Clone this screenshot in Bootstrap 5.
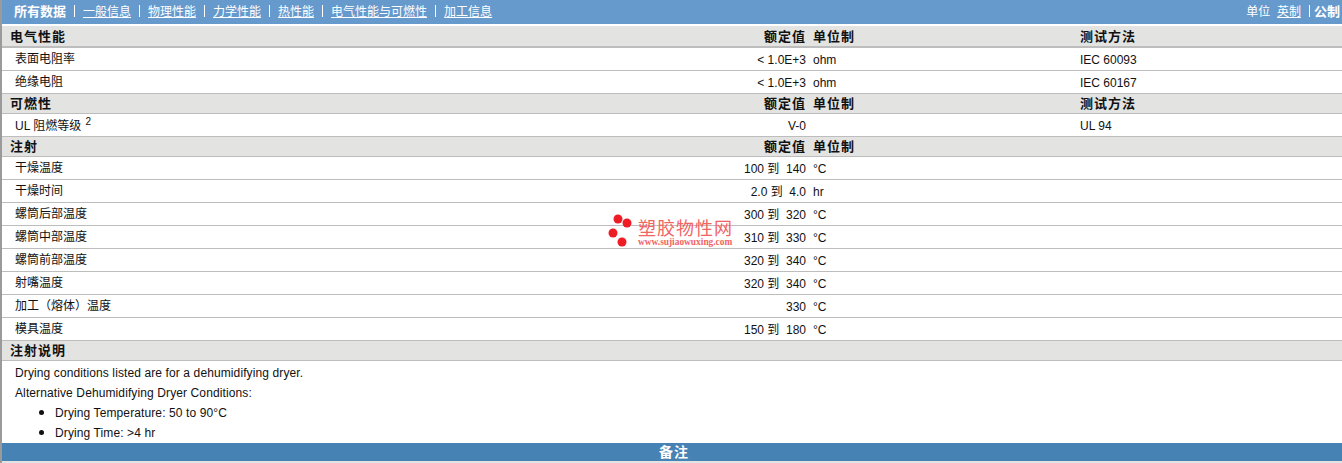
<!DOCTYPE html>
<html lang="zh">
<head>
<meta charset="utf-8">
<title>塑胶物性</title>
<link href="https://cdn.jsdelivr.net/npm/bootstrap@5.3.0/dist/css/bootstrap.min.css" rel="stylesheet">
<style>
html,body{height:463px;overflow:hidden}
body{background:#e3e3e1;font-family:"Liberation Sans","Noto Sans CJK SC",sans-serif;font-size:12px;color:#111;line-height:15px}
.pagewrap{border-left:2px solid #9a9a9a;height:463px}
.sheet{position:relative;background:#fff;height:461px}
.topbar{height:24px;background:#6699cc;color:#fff;padding:0 2px 0 12px;margin-bottom:2px}
.topbar a{color:#fff}
.topbar b{font-weight:700;font-size:13px}
.sepbar{display:inline-block;width:1px;height:12px;background:#fff;margin:0 8px;vertical-align:-1px}
.datatable{table-layout:fixed;width:100%;border-collapse:collapse;margin:0}
.datatable td,.datatable th{padding:0;vertical-align:middle;font-weight:400;color:#111;background:transparent;box-shadow:none;border-width:0 0 1px;border-style:solid;border-color:#bdbdbd}
.col-name{width:808px}.col-unit{width:267px}
.datatable .rowhead th{height:20px;background:#e3e3e1;font-weight:700;font-size:13px;letter-spacing:1px}
.datatable .rowhead th:first-child{padding-left:8px}
.datatable .rowhead.first th{height:21px;border-bottom-width:2px}
.datatable .rowdata td{height:23px;padding-top:4px}
.datatable .rowdata td:first-child{padding-left:13px}
.datatable .cell-val{text-align:right;padding-right:4px}
.datatable .cell-unit{padding-left:3px}
.label-text{display:inline-block;margin-top:-1px;vertical-align:top}
.notes{padding:5px 0 0 13px;height:82px;letter-spacing:.11px}
.notes p{margin:0 0 5px;height:15px}
.notes ul{margin:-2px 0 0;padding-left:40px}
.notes li{height:20px}
.notes li::marker{font-size:15px}
.footbar{height:18px;background:#4682b4;color:#fff;text-align:center;font-weight:700;font-size:14px;line-height:18px;letter-spacing:1px;padding-left:4px}
.stamp{position:absolute;left:606px;top:212px;width:130px;height:38px;color:#f26464}
.stamp svg{position:absolute;left:0;top:0}
.stamp-name{position:absolute;left:30px;top:8px;font-size:18px;line-height:18px;white-space:nowrap;letter-spacing:1px}
.stamp-url{position:absolute;left:30px;top:26px;font-family:"Liberation Serif",serif;font-size:9.4px;font-weight:700;line-height:9px;white-space:nowrap}
sup.refnote{font-size:10px;top:-5px;margin-left:1px}
</style>
</head>
<body>
<div class="pagewrap">
<div class="sheet">
  <div class="topbar d-flex justify-content-between align-items-center">
    <div><b>所有数据</b><span class="sepbar"></span><a href="#">一般信息</a><span class="sepbar"></span><a href="#">物理性能</a><span class="sepbar"></span><a href="#">力学性能</a><span class="sepbar"></span><a href="#">热性能</a><span class="sepbar"></span><a href="#">电气性能与可燃性</a><span class="sepbar"></span><a href="#">加工信息</a></div>
    <div>单位&nbsp; <a href="#">英制</a><span class="sepbar ms-2 me-1"></span><b>公制</b></div>
  </div>
  <table class="table datatable">
    <colgroup><col class="col-name"><col class="col-unit"><col></colgroup>
    <tbody>
      <tr class="rowhead first"><th>电气性能<span class="float-end me-1">额定值</span></th><th class="cell-unit">单位制</th><th class="cell-unit">测试方法</th></tr>
      <tr class="rowdata"><td><span class="label-text">表面电阻率</span><span class="float-end cell-val">&lt; 1.0E+3</span></td><td class="cell-unit">ohm</td><td class="cell-unit">IEC 60093</td></tr>
      <tr class="rowdata"><td><span class="label-text">绝缘电阻</span><span class="float-end cell-val">&lt; 1.0E+3</span></td><td class="cell-unit">ohm</td><td class="cell-unit">IEC 60167</td></tr>
      <tr class="rowhead"><th>可燃性<span class="float-end me-1">额定值</span></th><th class="cell-unit">单位制</th><th class="cell-unit">测试方法</th></tr>
      <tr class="rowdata"><td>UL 阻燃等级 <sup class="refnote">2</sup><span class="float-end cell-val">V-0</span></td><td class="cell-unit"></td><td class="cell-unit">UL 94</td></tr>
      <tr class="rowhead"><th>注射<span class="float-end me-1">额定值</span></th><th class="cell-unit">单位制</th><th></th></tr>
      <tr class="rowdata"><td><span class="label-text">干燥温度</span><span class="float-end cell-val">100 到&nbsp; 140</span></td><td class="cell-unit">°C</td><td></td></tr>
      <tr class="rowdata"><td><span class="label-text">干燥时间</span><span class="float-end cell-val">2.0 到&nbsp; 4.0</span></td><td class="cell-unit">hr</td><td></td></tr>
      <tr class="rowdata"><td><span class="label-text">螺筒后部温度</span><span class="float-end cell-val">300 到&nbsp; 320</span></td><td class="cell-unit">°C</td><td></td></tr>
      <tr class="rowdata"><td><span class="label-text">螺筒中部温度</span><span class="float-end cell-val">310 到&nbsp; 330</span></td><td class="cell-unit">°C</td><td></td></tr>
      <tr class="rowdata"><td><span class="label-text">螺筒前部温度</span><span class="float-end cell-val">320 到&nbsp; 340</span></td><td class="cell-unit">°C</td><td></td></tr>
      <tr class="rowdata"><td><span class="label-text">射嘴温度</span><span class="float-end cell-val">320 到&nbsp; 340</span></td><td class="cell-unit">°C</td><td></td></tr>
      <tr class="rowdata"><td><span class="label-text">加工（熔体）温度</span><span class="float-end cell-val">330</span></td><td class="cell-unit">°C</td><td></td></tr>
      <tr class="rowdata"><td><span class="label-text">模具温度</span><span class="float-end cell-val">150 到&nbsp; 180</span></td><td class="cell-unit">°C</td><td></td></tr>
      <tr class="rowhead"><th colspan="3">注射说明</th></tr>
    </tbody>
  </table>
  <div class="notes">
    <p>Drying conditions listed are for a dehumidifying dryer.</p>
    <p>Alternative Dehumidifying Dryer Conditions:</p>
    <ul>
      <li>Drying Temperature: 50 to 90°C</li>
      <li>Drying Time: &gt;4 hr</li>
    </ul>
  </div>
  <div class="footbar">备注</div>
  <div class="stamp">
    <svg width="30" height="38" viewBox="0 0 30 38"><g fill="#ee1c25"><circle cx="10" cy="7" r="4.5"/><circle cx="19" cy="11" r="4.5"/><circle cx="5" cy="21" r="4.5"/><circle cx="14" cy="30" r="4.5"/></g></svg>
    <div class="stamp-name">塑胶物性网</div>
    <div class="stamp-url">www.sujiaowuxing.com</div>
  </div>
</div>
</div>
</body>
</html>
